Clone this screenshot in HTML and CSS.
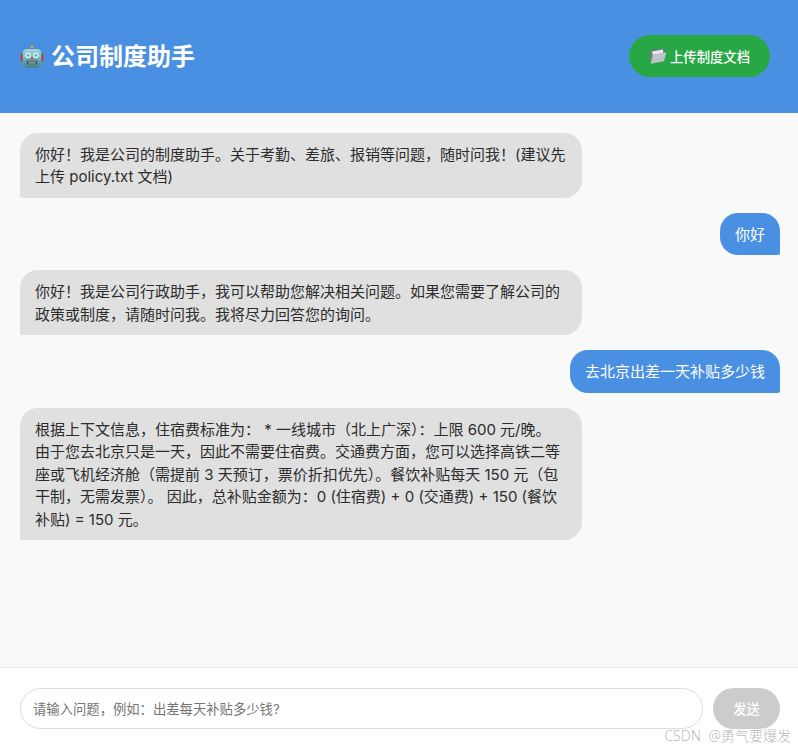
FILE: index.html
```html
<!DOCTYPE html>
<html lang="zh">
<head>
<meta charset="utf-8">
<title>公司制度助手</title>
<link rel="stylesheet" href="styles.css">
</head>
<body>
<div class="app">
  <header class="header">
    <h1 class="title">
      <svg class="robot" viewBox="0 0 24 24" aria-hidden="true">
        <defs>
          <linearGradient id="head" x1="0" y1="0" x2="0" y2="1">
            <stop offset="0" stop-color="#a6d6d8"/>
            <stop offset="0.6" stop-color="#6aa8ae"/>
            <stop offset="1" stop-color="#3f7f8c"/>
          </linearGradient>
        </defs>
        <rect x="10.8" y="0.6" width="2.4" height="3" rx="1.1" fill="#e9a52f"/>
        <rect x="10" y="3" width="4" height="1.6" rx="0.6" fill="#8d6aa8"/>
        <rect x="0.6" y="8.6" width="3" height="8" rx="1.3" fill="#b3404e"/>
        <rect x="20.4" y="8.6" width="3" height="8" rx="1.3" fill="#b3404e"/>
        <rect x="2.6" y="4" width="18.8" height="19" rx="4.5" fill="url(#head)"/>
        <circle cx="8" cy="10.4" r="2.7" fill="#eafafb"/>
        <circle cx="16" cy="10.4" r="2.7" fill="#eafafb"/>
        <circle cx="8" cy="10.4" r="1.4" fill="#30b9d6"/>
        <circle cx="16" cy="10.4" r="1.4" fill="#30b9d6"/>
        <path d="M12 11.2l1.5 3h-3z" fill="#d6434c"/>
        <rect x="6.8" y="15.6" width="10.4" height="4" rx="1.4" fill="#2d4850"/>
        <path d="M9 15.8v3.6M11 15.8v3.6M13 15.8v3.6M15 15.8v3.6" stroke="#c2d0d3" stroke-width="0.9"/>
      </svg>
      <span>公司制度助手</span>
    </h1>
    <button class="upload" type="button">
      <svg class="folder" viewBox="0 0 18 18" aria-hidden="true">
        <path d="M1 3.5l6-2 1.2 1.2 6.8-1.6 0.6 6-12 9-2-0.6z" fill="#6f7a80"/>
        <path d="M3 4.6l11-2 .4 5-10 3z" fill="#e6eaec"/>
        <path d="M1.6 16.8l2.4-9.6 13.4-1.6-2.4 8.6z" fill="#bcc4c9"/>
      </svg>
      <span>上传制度文档</span>
    </button>
  </header>
  <main class="chat">
    <div class="msg bot">你好！我是公司的制度助手。关于考勤、差旅、报销等问题，随时问我！(建议先上传 policy.txt 文档)</div>
    <div class="msg user">你好</div>
    <div class="msg bot">你好！我是公司行政助手，我可以帮助您解决相关问题。如果您需要了解公司的政策或制度，请随时问我。我将尽力回答您的询问。</div>
    <div class="msg user">去北京出差一天补贴多少钱</div>
    <div class="msg bot">根据上下文信息，住宿费标准为： * 一线城市（北上广深）：上限 600 元/晚。<br>由于您去北京只是一天，因此不需要住宿费。交通费方面，您可以选择高铁二等座或飞机经济舱（需提前 3 天预订，票价折扣优先）。餐饮补贴每天 150 元（包干制，无需发票）。 因此，总补贴金额为：0 (住宿费) + 0 (交通费) + 150 (餐饮补贴) = 150 元。</div>
  </main>
  <footer class="composer">
    <input class="input" type="text" placeholder="请输入问题，例如：出差每天补贴多少钱?">
    <button class="send" type="button">发送</button>
  </footer>
  <div class="watermark">CSDN @勇气要爆发</div>
</div>
</body>
</html>
```
FILE: styles.css
```css
* { box-sizing: border-box; }
html, body { margin: 0; height: 100%; }
body {
  font-family: "Inter", "Noto Sans CJK SC", sans-serif;
  color: #2c2c2c;
  background: #fff;
}
.app {
  position: relative;
  display: flex;
  flex-direction: column;
  height: 749px;
  overflow: hidden;
}
.header {
  height: 112.8px;
  flex: none;
  display: flex;
  align-items: center;
  justify-content: space-between;
  padding: 0 28px 0 20px;
  background: #4a90e2;
  color: #fff;
}
.title {
  margin: 1px 0 0;
  display: flex;
  align-items: center;
  gap: 7px;
  font-size: 24px;
  font-weight: 700;
  line-height: 1.5;
}
.robot { width: 24px; height: 24px; display: block; }
.upload {
  height: 42px;
  width: 141px;
  display: flex;
  align-items: center;
  justify-content: center;
  gap: 3px;
  padding: 0;
  border: 0;
  border-radius: 21px;
  background: #28a745;
  color: #fff;
  font: 500 13.333px "Inter", "Noto Sans CJK SC", sans-serif;
}
.folder { width: 18px; height: 18px; display: block; }
.chat {
  flex: 1;
  display: flex;
  flex-direction: column;
  align-items: flex-start;
  gap: 15px;
  padding: 20px 18px 20px 20px;
  background: #f9f9f9;
}
.msg {
  max-width: 562px;
  padding: 11px 15px 9px;
  border-radius: 18px;
  font-size: 15px;
  line-height: 1.5;
}
.bot {
  width: 562px;
  background: #e0e0e0;
  border-bottom-left-radius: 2px;
}
.user {
  align-self: flex-end;
  background: #4a90e2;
  color: #fff;
  border-bottom-right-radius: 2px;
}
.composer {
  height: 82px;
  flex: none;
  display: flex;
  gap: 10px;
  padding: 20px 18px 20px 20px;
  background: #fff;
  border-top: 1px solid #eee;
}
.input {
  flex: 1;
  min-width: 0;
  height: 41px;
  padding: 0 12px;
  border: 1px solid #ddd;
  border-radius: 21px;
  background: #fff;
  font: 13.333px "Inter", "Noto Sans CJK SC", sans-serif;
}
.input::placeholder { color: #757575; }
.send {
  width: 67px;
  height: 41px;
  padding: 0;
  border: 0;
  border-radius: 21px;
  background: #ccc;
  color: #fff;
  font: 500 13.333px "Inter", "Noto Sans CJK SC", sans-serif;
}
.watermark {
  position: absolute;
  right: 7px;
  bottom: 3px;
  font-family: "Noto Sans", "Noto Sans CJK SC", sans-serif;
  font-size: 14px;
  line-height: 20px;
  font-weight: 300;
  word-spacing: 4px;
  color: rgba(120, 120, 120, 0.55);
  text-shadow: 0 0 1px rgba(255,255,255,0.8);
}
```
